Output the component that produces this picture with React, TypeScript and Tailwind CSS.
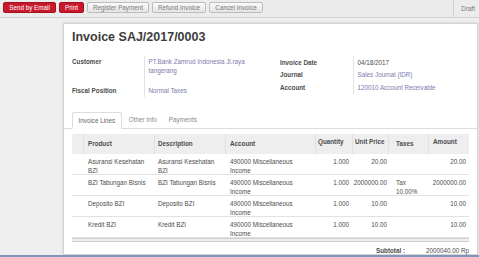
import React from "react";

const lines = [
  { product: ["Asuransi Kesehatan", "BZI"], desc: ["Asuransi Kesehatan", "BZI"], qty: "1.000", price: "20.00", taxes: [], amount: "20.00" },
  { product: ["BZI Tabungan Bisnis"], desc: ["BZI Tabungan Bisnis"], qty: "1.000", price: "2000000.00", taxes: ["Tax", "10.00%"], amount: "2000000.00" },
  { product: ["Deposito BZI"], desc: ["Deposito BZI"], qty: "1.000", price: "10.00", taxes: [], amount: "10.00" },
  { product: ["Kredit BZI"], desc: ["Kredit BZI"], qty: "1.000", price: "10.00", taxes: [], amount: "10.00" },
];

const grayBtn =
  "h-[11px] whitespace-nowrap rounded-[2px] border border-[#bdbdbd] bg-gradient-to-b from-[#fbfbfb] to-[#e4e4e4] text-[#7a7a7a] leading-[9px]";
const redBtn =
  "h-[11px] whitespace-nowrap rounded-[2px] border border-[#a3111f] bg-[#c9192c] text-white leading-[9px]";

const App = () => {
  return (
    <div className="flex h-[257px] w-[479px] flex-col overflow-hidden font-['Liberation_Sans',Arial,sans-serif] text-[6.3px] text-[#4c4c4c]">
      {/* top bar */}
      <div className="flex h-[18px] shrink-0 items-start border-b border-[#d2d2d2] bg-[#ececec] pt-[2px]">
        <div className="flex gap-[3px] pl-[3px]">
          <button className={redBtn + " w-[53px]"}>Send by Email</button>
          <button className={redBtn + " w-[25px]"}>Print</button>
          <button className={grayBtn + " w-[62px]"}>Register Payment</button>
          <button className={grayBtn + " w-[54px]"}>Refund Invoice</button>
          <button className={grayBtn + " w-[54px]"}>Cancel Invoice</button>
        </div>
        <div className="ml-auto -mt-[2px] flex h-[17px] items-center border-l border-[#d2d2d2] pl-[7px] pr-[4px] text-[#777]">
          Draft
        </div>
      </div>

      {/* sheet area */}
      <div className="flex-1 overflow-hidden bg-[#efefef] pl-[63px] pt-[5px]">
        <div className="h-full w-[415px] border border-[#d4d4d4] bg-white px-[8px] pt-[6px] shadow-[0_0_3px_rgba(0,0,0,0.12)]">
          <div className="text-[12.5px] font-bold leading-[15px] text-[#3d3d3d]">
            Invoice SAJ/2017/0003
          </div>

          <div className="mt-[11px] flex">
            <div className="w-[208px]">
              <div className="flex h-[30px]">
                <div className="w-[72px] pt-[0.5px] font-bold leading-[9px]">Customer</div>
                <div className="border-l border-[#e2e2e2] pl-[3.5px] pt-[0.5px] leading-[9.5px] text-[#7c7bad]">
                  <div>PT.Bank Zamrud Indonesia Jl.raya</div>
                  <div>tangerang</div>
                </div>
              </div>
              <div className="flex h-[11px]">
                <div className="w-[72px] font-bold leading-[9px]">Fiscal Position</div>
                <div className="border-l border-[#e2e2e2] pl-[3.5px] leading-[9px] text-[#7c7bad]">
                  Normal Taxes
                </div>
              </div>
            </div>

            <div className="flex-1">
              {[
                ["Invoice Date", "04/18/2017", false],
                ["Journal", "Sales Journal (IDR)", true],
                ["Account", "120010 Account Receivable", true],
              ].map(([label, value, link], i) => (
                <div key={i} className="flex h-[12.7px]">
                  <div className="w-[73px] pt-[1.5px] font-bold leading-[9px]">{label}</div>
                  <div
                    className={
                      "border-l border-[#e2e2e2] pl-[3.5px] pt-[1.5px] leading-[9px] " +
                      (link ? "text-[#7c7bad]" : "")
                    }
                  >
                    {value}
                  </div>
                </div>
              ))}
            </div>
          </div>

          {/* tabs */}
          <div className="-mx-[8px] mt-[15px] flex border-b border-[#dcdcdc] px-[8px]">
            <div className="-mb-[1px] flex h-[17px] items-center rounded-t-[2px] border border-[#dcdcdc] border-b-white bg-white px-[5.5px] text-[#666]">
              Invoice Lines
            </div>
            <div className="ml-[1px] flex h-[16px] items-center px-[6px] text-[#888]">Other Info</div>
            <div className="flex h-[16px] items-center px-[6px] text-[#888]">Payments</div>
          </div>

          {/* table */}
          <div className="mt-[5px] w-[397px]">
            <div className="flex h-[20px] bg-[#eeeeee] font-bold">
              <div className="w-[12px] border-r border-[#e0e0e0]" />
              <div className="flex w-[71px] items-center border-r border-[#e0e0e0] pl-[4px]">Product</div>
              <div className="flex w-[71px] items-center border-r border-[#e0e0e0] pl-[3px]">Description</div>
              <div className="flex w-[90px] items-center border-r border-[#e0e0e0] pl-[4px]">Account</div>
              <div className="w-[37px] border-r border-[#e0e0e0] pl-[2px] pt-[3px]">Quantity</div>
              <div className="w-[36px] border-r border-[#e0e0e0] pl-[2px] pt-[3px]">Unit Price</div>
              <div className="flex w-[40px] items-center border-r border-[#e0e0e0] pl-[7px]">Taxes</div>
              <div className="w-[40px] pl-[4px] pt-[3px]">Amount</div>
            </div>
            {lines.map((l, i) => (
              <div key={i} className="flex h-[21px] border-b border-[#e2e2e2] pt-[3px] leading-[9px]">
                <div className="w-[12px]" />
                <div className="w-[71px] pl-[4px]">
                  {l.product.map((t, j) => (
                    <div key={j}>{t}</div>
                  ))}
                </div>
                <div className="w-[71px] pl-[3px]">
                  {l.desc.map((t, j) => (
                    <div key={j}>{t}</div>
                  ))}
                </div>
                <div className="w-[90px] pl-[4px]">
                  <div>490000 Miscellaneous</div>
                  <div>Income</div>
                </div>
                <div className="w-[37px] pr-[4px] text-right">{l.qty}</div>
                <div className="w-[36px] pr-[2px] text-right">{l.price}</div>
                <div className="w-[40px] pl-[7px]">
                  {l.taxes.map((t, j) => (
                    <div key={j}>{t}</div>
                  ))}
                </div>
                <div className="w-[40px] pr-[3px] text-right">{l.amount}</div>
              </div>
            ))}
            <div className="h-[4px] border-y border-[#cfcfcf] bg-[#eeeeee]" />
          </div>

          <div className="mt-[4px] flex whitespace-nowrap leading-[9px]">
            <div className="ml-[304px] w-[52px] font-bold">Subtotal :</div>
            <div>2000040.00 Rp</div>
          </div>
        </div>
      </div>
      <div className="h-[2px] shrink-0 bg-[#7d96b9]" />
    </div>
  );
};

export default App;
